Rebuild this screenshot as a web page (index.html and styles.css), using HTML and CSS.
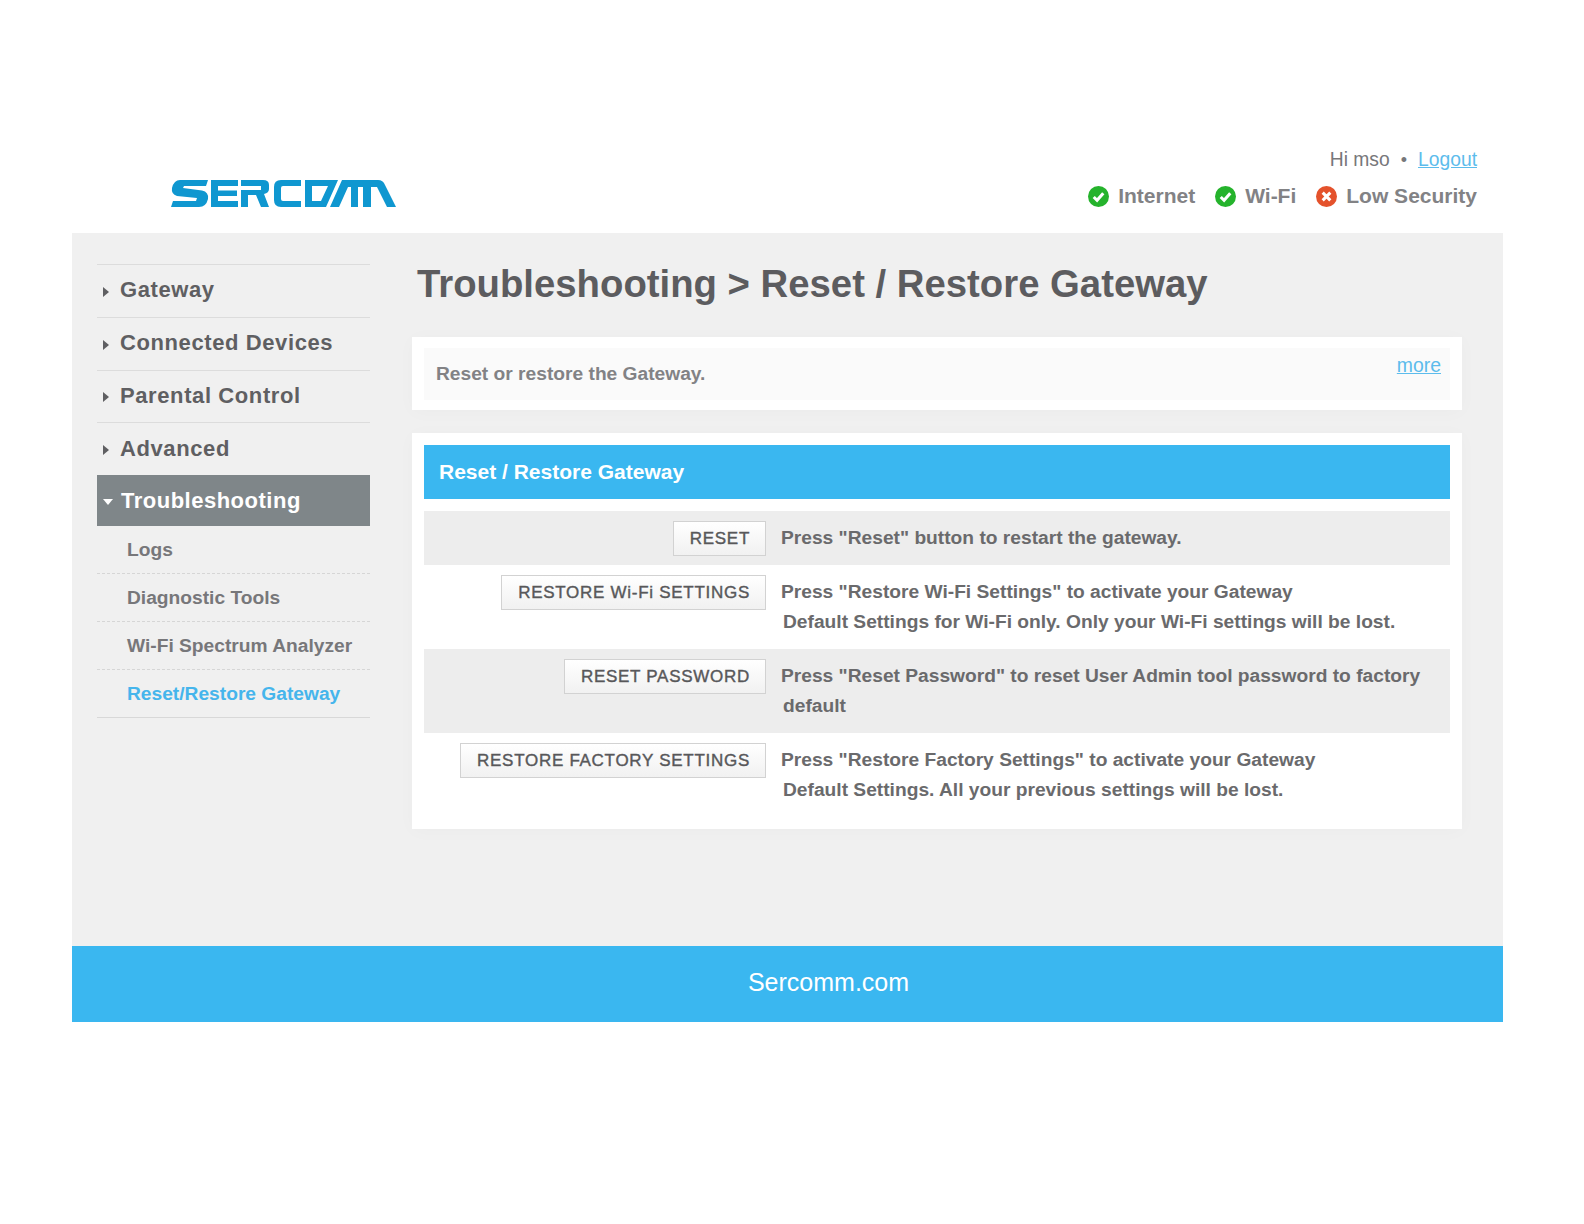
FILE: index.html
```html
<!DOCTYPE html>
<html lang="en">
<head>
<meta charset="utf-8">
<title>Reset / Restore Gateway</title>
<link rel="stylesheet" href="styles.css">
</head>
<body>
<div class="page">
  <header class="top">
    <svg class="logo" viewBox="0 0 225 27" width="225" height="27" aria-label="Sercomm">
      <path d="M9 0H37L35 6H13L12 8L31 10.500Q38 12 37 19Q35 27 28 27H0L2 21H25L26 18L6 16Q0 14 1 8Q3 0 9 0Z"/>
      <path d="M40 0H67V6H47V10.500H66V16H47V21H67V27H40Z"/>
      <path d="M70 0H92Q98 0 98 5V9Q98 13 93 14L98 27H90L85 15H77V27H70V10H90V6H70Z"/>
      <path d="M130 0H110Q103 0 103 7V20Q103 27 110 27H130V21H112Q110 21 110 19V8Q110 6 112 6H130Z"/>
      <path fill-rule="evenodd" d="M134 0H167L155 27H134ZM141 6V21H150L157 6Z"/>
      <path d="M159 27L171 0H207Q212 0 214 5L225 27H216L206 7H200V27H192V7H187V27H180V7H177L168 27Z"/>
    </svg>
    <div class="account">
      <div class="greeting"><span>Hi mso</span><span class="dot">•</span><a href="#" class="link">Logout</a></div>
      <div class="status">
        <span class="stat">
          <svg class="ico" viewBox="0 0 22 22" width="21" height="21"><circle class="ok" cx="11" cy="11" r="11"/><path class="mark" d="M6 11.500L9.500 15L16 7.500"/></svg>
          Internet
        </span>
        <span class="stat">
          <svg class="ico" viewBox="0 0 22 22" width="21" height="21"><circle class="ok" cx="11" cy="11" r="11"/><path class="mark" d="M6 11.500L9.500 15L16 7.500"/></svg>
          Wi-Fi
        </span>
        <span class="stat">
          <svg class="ico" viewBox="0 0 22 22" width="21" height="21"><circle class="bad" cx="11" cy="11" r="11"/><path class="mark" d="M7 7L15 15M15 7L7 15"/></svg>
          Low Security
        </span>
      </div>
    </div>
  </header>

  <div class="panel">
    <nav class="side">
      <a class="nav" href="#"><i class="tri"></i>Gateway</a>
      <a class="nav" href="#"><i class="tri"></i>Connected Devices</a>
      <a class="nav" href="#"><i class="tri"></i>Parental Control</a>
      <a class="nav" href="#"><i class="tri"></i>Advanced</a>
      <a class="nav active" href="#"><i class="tri-down"></i>Troubleshooting</a>
      <a class="sub" href="#">Logs</a>
      <a class="sub" href="#">Diagnostic Tools</a>
      <a class="sub" href="#">Wi-Fi Spectrum Analyzer</a>
      <a class="sub current" href="#">Reset/Restore Gateway</a>
    </nav>

    <main class="main">
      <h1 class="title">Troubleshooting &gt; Reset / Restore Gateway</h1>
      <section class="intro">
        <div class="intro-in">
          <p class="intro-text">Reset or restore the Gateway.</p>
          <a class="link more" href="#">more</a>
        </div>
      </section>
      <section class="card">
        <h2 class="card-head">Reset / Restore Gateway</h2>
        <div class="row short shade">
          <div class="act"><button class="btn">RESET</button></div>
          <div class="desc"><p>Press "Reset" button to restart the gateway.</p></div>
        </div>
        <div class="row">
          <div class="act"><button class="btn">RESTORE Wi-Fi SETTINGS</button></div>
          <div class="desc"><p>Press "Restore Wi-Fi Settings" to activate your Gateway</p><p class="cont">Default Settings for Wi-Fi only. Only your Wi-Fi settings will be lost.</p></div>
        </div>
        <div class="row shade">
          <div class="act"><button class="btn">RESET PASSWORD</button></div>
          <div class="desc"><p>Press "Reset Password" to reset User Admin tool password to factory</p><p class="cont">default</p></div>
        </div>
        <div class="row">
          <div class="act"><button class="btn">RESTORE FACTORY SETTINGS</button></div>
          <div class="desc"><p>Press "Restore Factory Settings" to activate your Gateway</p><p class="cont">Default Settings. All your previous settings will be lost.</p></div>
        </div>
      </section>
    </main>
  </div>

  <footer class="foot">Sercomm.com</footer>
</div>
</body>
</html>
```

FILE: styles.css
```css
* { box-sizing: border-box; }
html, body { margin: 0; background: #fff; }
body { font-family: "Liberation Sans", Arial, sans-serif; color: #6a6a6c; }
p, h1, h2 { margin: 0; }

.page { width: 1431px; margin-left: 72px; }

.top {
  height: 233px;
  display: flex;
  justify-content: space-between;
  align-items: flex-start;
  padding: 148px 26px 0 99px;
}
.logo { margin-top: 32px; fill: #0f97d0; display: block; }
.account { display: flex; flex-direction: column; align-items: flex-end; }
.greeting { display: flex; align-items: center; font-size: 19.300px; line-height: 22px; height: 24px; color: #77777a; }
.dot { margin: 0 11px 0 11px; font-size: 18px; }
.link { color: #5cbcec; text-decoration: underline; }
.status { display: flex; margin-top: 12px; font-size: 21px; font-weight: bold; line-height: 24px; color: #828285; }
.stat { display: flex; align-items: center; margin-left: 20px; }
.ico { margin-right: 9px; flex: none; }
.ok { fill: #25b32c; }
.bad { fill: #e4522c; }
.mark { fill: none; stroke: #fff; stroke-width: 3.2; }

.panel {
  height: 713px;
  background: #f0f0f0;
  display: flex;
  align-items: flex-start;
  padding: 31px 41px 0 25px;
}
.side { width: 273px; flex: none; margin-right: 42px; display: flex; flex-direction: column; }
.nav {
  height: 52.750px;
  border-top: 1px solid #dcdcdc;
  display: flex;
  align-items: center;
  padding: 0 0 1px 6px;
  font-size: 22px;
  font-weight: bold;
  letter-spacing: .6px;
  color: #5f5f62;
  text-decoration: none;
}
.tri {
  width: 0; height: 0;
  border-left: 6px solid #5f5f62;
  border-top: 5.500px solid transparent;
  border-bottom: 5.500px solid transparent;
  margin: 3px 11px 0 0;
}
.tri-down {
  width: 0; height: 0;
  border-top: 6px solid #fff;
  border-left: 5.500px solid transparent;
  border-right: 5.500px solid transparent;
  margin: 2px 8px 0 0;
}
.nav.active { height: 51px; border-top: 0; padding-bottom: 0; background: #7f8689; color: #fff; letter-spacing: .5px; }
.sub {
  height: 48px;
  padding: 12px 0 0 30px;
  font-size: 19.200px;
  line-height: 24px;
  font-weight: bold;
  color: #77777a;
  text-decoration: none;
  border-bottom: 1px dashed #d6d6d6;
}
.sub.current { color: #45b5ec; border-bottom: 1px solid #d8d8d8; }

.main { width: 1050px; flex: none; }
.title { height: 73px; padding: 0 0 0 5px; font-size: 38.300px; line-height: 39px; font-weight: bold; color: #5c5c5f; white-space: nowrap; }
.intro { background: #fff; padding: 11px 12px 10px; height: 73px; box-shadow: 0 2px 18px rgba(0,0,0,.025); }
.intro-in { background: #fafafa; height: 52px; display: flex; justify-content: space-between; padding: 0 9px 0 12px; }
.intro-text { font-size: 19.200px; font-weight: bold; line-height: 24px; padding-top: 14px; color: #828285; }
.more { font-size: 19.400px; line-height: 24px; padding-top: 5px; height: 30px; }

.card { margin-top: 23px; height: 396px; background: #fff; padding: 12px; box-shadow: 0 2px 18px rgba(0,0,0,.025); }
.card-head { height: 54px; margin-bottom: 12px; background: #3ab7f0; color: #fff; font-size: 21px; line-height: 54px; padding-left: 15px; }
.row { display: flex; height: 84px; }
.row.short { height: 54px; }
.shade { background: #ededed; }
.act { width: 342px; flex: none; display: flex; justify-content: flex-end; align-items: flex-start; padding-top: 10px; }
.btn {
  height: 35px;
  padding: 0 15px 0 16px;
  border: 1px solid #d2d2d2;
  background: linear-gradient(#fff, #f1f1f1);
  font: 17px/1 "Liberation Sans", Arial, sans-serif;
  -webkit-text-stroke: .4px #58585a;
  letter-spacing: .72px;
  color: #58585a;
  white-space: nowrap;
}
.desc { padding: 12px 0 0 15px; font-size: 19.200px; line-height: 30px; font-weight: bold; color: #6a6a6c; white-space: nowrap; }
.cont { padding-left: 2px; }

.foot { height: 76px; background: #3ab7f0; color: #fff; font-size: 25px; line-height: 73px; text-align: center; padding-left: 82px; }
```
